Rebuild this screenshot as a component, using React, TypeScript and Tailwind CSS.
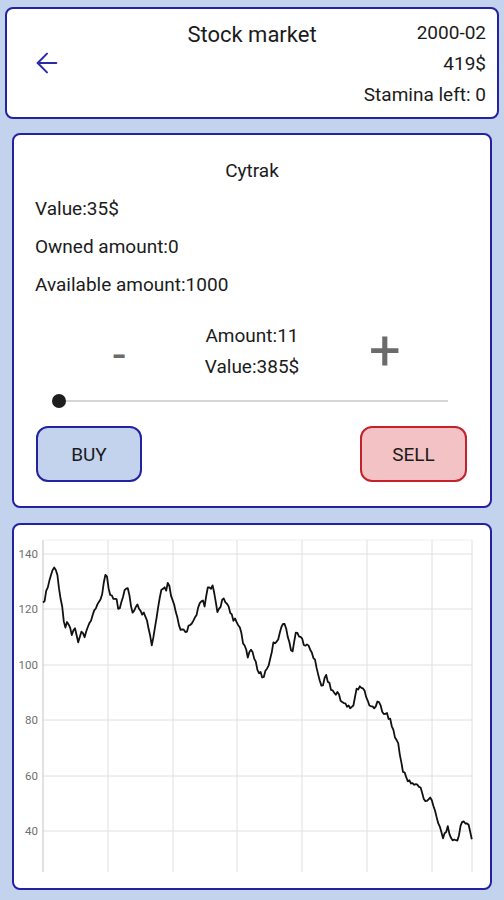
import React from "react";
import { ArrowLeft } from "lucide-react";

// rough shape of the price history, in page pixels
const keyPoints: [number, number][] = [
  [43, 605], [47, 590], [53, 568], [57, 572], [61, 600], [65, 627], [68, 620], [72, 635],
  [75, 627], [78, 642], [82, 632], [85, 638], [88, 628], [92, 615], [97, 607], [102, 593],
  [106, 570], [110, 595], [113, 598], [116, 597], [119, 613], [123, 598], [126, 587],
  [128, 588], [133, 615], [137, 605], [140, 613], [143, 613], [148, 625], [152, 647],
  [157, 615], [162, 588], [167, 590], [168, 583], [173, 602], [180, 630], [187, 630],
  [192, 622], [197, 612], [202, 600], [205, 605], [208, 588], [213, 586], [218, 613],
  [223, 600], [228, 605], [233, 618], [238, 622], [243, 642], [248, 656], [252, 648],
  [257, 669], [263, 677], [268, 667], [273, 645], [278, 638], [283, 622], [287, 633],
  [292, 652], [296, 633], [300, 635], [305, 648], [308, 643], [312, 653], [317, 668],
  [322, 688], [326, 675], [332, 690], [338, 695], [345, 705], [352, 709], [357, 688],
  [363, 688], [368, 702], [373, 708], [378, 701], [383, 712], [388, 715], [392, 725],
  [395, 737], [398, 743], [403, 772], [408, 780], [413, 783], [420, 787], [425, 802],
  [430, 797], [437, 817], [443, 837], [448, 828], [452, 838], [457, 843], [463, 818],
  [468, 825], [473, 843],
];

const noise = (i: number) => {
  const v = Math.sin(i * 12.9898) * 43758.5453;
  return v - Math.floor(v);
};

const buildLine = () => {
  const pts: string[] = [];
  let i = 0;
  for (let x = 43; x <= 473; x += 1.6) {
    let k = 0;
    while (k < keyPoints.length - 2 && keyPoints[k + 1][0] < x) k++;
    const [x0, y0] = keyPoints[k];
    const [x1, y1] = keyPoints[k + 1];
    const t = Math.min(1, Math.max(0, (x - x0) / (x1 - x0)));
    const y = y0 + (y1 - y0) * t + (noise(i) - 0.5) * 5;
    pts.push(`${x.toFixed(1)},${y.toFixed(1)}`);
    i++;
  }
  return pts.join(" ");
};

const yTicks = [
  { label: "140", y: 554 },
  { label: "120", y: 609 },
  { label: "100", y: 665 },
  { label: "80", y: 720 },
  { label: "60", y: 776 },
  { label: "40", y: 831 },
];
const xGrid = [108, 173, 237, 302, 367, 432, 472];

const PriceChart = () => (
  <svg width="474" height="363" viewBox="14 525 474 363" className="block">
    <line x1="43" y1="540" x2="472" y2="540" stroke="#f0f0f0" strokeWidth="1" />
    {yTicks.map((t) => (
      <g key={t.label}>
        <line x1="43" y1={t.y} x2="472" y2={t.y} stroke="#e0e0e0" strokeWidth="1" />
        <text
          x="38"
          y={t.y + 4}
          textAnchor="end"
          fontSize="11.5"
          fill="#6f6f6f"
          fontFamily="Roboto, sans-serif"
        >
          {t.label}
        </text>
      </g>
    ))}
    {xGrid.map((x) => (
      <line key={x} x1={x} y1="540" x2={x} y2="872" stroke="#e0e0e0" strokeWidth="1" />
    ))}
    <line x1="43" y1="540" x2="43" y2="872" stroke="#c4c4c4" strokeWidth="1" />
    <polyline points={buildLine()} fill="none" stroke="#111" strokeWidth="1.8" strokeLinejoin="round" />
  </svg>
);

export default function App() {
  return (
    <div className="min-h-[900px] w-full bg-[#c3d3ee] pt-[7px] text-[#1b1b1b] font-['Roboto',sans-serif]">
      {/* header */}
      <div className="mx-[5px] h-[112px] rounded-[8px] border-2 border-[#2323a0] bg-white grid grid-cols-[1fr_auto_1fr]">
        <div className="flex items-center pl-[24px]">
          <ArrowLeft size={32} strokeWidth={1.5} color="#2b2ba6" />
        </div>
        <div className="pt-[12px] text-[22px] leading-[28px]">Stock market</div>
        <div className="flex flex-col items-end pr-[11px] pt-[8px] text-[19px] leading-[31px]">
          <span>2000-02</span>
          <span>419$</span>
          <span>Stamina left: 0</span>
        </div>
      </div>

      {/* trade card */}
      <div className="mx-[12px] mt-[14px] h-[375px] rounded-[8px] border-2 border-[#2323a0] bg-white pt-[17px] text-[19px]">
        <div className="h-[38px] flex items-center justify-center">Cytrak</div>
        <div className="h-[38px] flex items-center pl-[21px]">Value:35$</div>
        <div className="h-[38px] flex items-center pl-[21px]">Owned amount:0</div>
        <div className="h-[38px] flex items-center pl-[21px]">Available amount:1000</div>

        <div className="mt-[16px] flex items-center justify-center">
          <button className="w-[60px] pt-[6px] text-center text-[46px] leading-[44px] text-[#6b6b6b]">-</button>
          <div className="w-[206px] flex flex-col items-center">
            <span className="h-[31px] leading-[31px]">Amount:11</span>
            <span className="h-[31px] leading-[31px]">Value:385$</span>
          </div>
          <button className="w-[60px] text-center text-[56px] leading-[50px] text-[#6b6b6b]">+</button>
        </div>

        <div className="mt-[9px] ml-[44px] mr-[42px] h-[20px] relative flex items-center">
          <div className="h-[2px] w-full bg-[#d6d6d6]" />
          <div className="absolute left-[-6px] top-[3px] h-[14px] w-[14px] rounded-full bg-[#1e1e1e]" />
        </div>

        <div className="mt-[15px] flex justify-between pl-[22px] pr-[23px]">
          <button className="h-[56px] w-[106px] rounded-[12px] border-2 border-[#2323a0] bg-[#c3d3ee] pt-[3px] text-[19px]">
            BUY
          </button>
          <button className="h-[56px] w-[107px] rounded-[12px] border-2 border-[#c4222b] bg-[#f3c2c5] pt-[3px] text-[19px]">
            SELL
          </button>
        </div>
      </div>

      {/* price chart */}
      <div className="mx-[12px] mt-[15px] h-[367px] rounded-[8px] border-2 border-[#2323a0] bg-white overflow-hidden">
        <PriceChart />
      </div>
    </div>
  );
}
